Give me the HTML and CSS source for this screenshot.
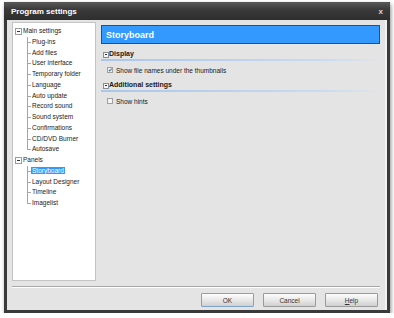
FILE: index.html
```html
<!DOCTYPE html>
<html lang="en">
<head>
    <meta charset="UTF-8">
    <title>Program settings</title>
    <link rel="stylesheet" href="styles.css">
</head>
<body>
    <div class="window">
        <div class="titlebar">
            <span class="title">Program settings</span>
            <span class="close">x</span>
        </div>
        <div class="client">
            <div class="main">
                <div class="tree">
                    <div class="node root"><span class="toggle"></span>Main settings</div>
                    <div class="children">
                        <div class="node">Plug-ins</div>
                        <div class="node">Add files</div>
                        <div class="node">User interface</div>
                        <div class="node">Temporary folder</div>
                        <div class="node">Language</div>
                        <div class="node">Auto update</div>
                        <div class="node">Record sound</div>
                        <div class="node">Sound system</div>
                        <div class="node">Confirmations</div>
                        <div class="node">CD/DVD Burner</div>
                        <div class="node last">Autosave</div>
                    </div>
                    <div class="node root"><span class="toggle"></span>Panels</div>
                    <div class="children">
                        <div class="node"><span class="selected">Storyboard</span></div>
                        <div class="node">Layout Designer</div>
                        <div class="node">Timeline</div>
                        <div class="node last">Imagelist</div>
                    </div>
                </div>
                <div class="pane">
                    <div class="pane-header">Storyboard</div>
                    <div class="section">
                        <div class="section-title"><span class="toggle"></span>Display</div>
                        <label class="option"><span class="check checked">&#10004;</span>Show file names under the thumbnails</label>
                    </div>
                    <div class="section">
                        <div class="section-title"><span class="toggle"></span>Additional settings</div>
                        <label class="option"><span class="check"></span>Show hints</label>
                    </div>
                </div>
            </div>
            <div class="footer">
                <button class="btn default">OK</button>
                <button class="btn">Cancel</button>
                <button class="btn"><u>H</u>elp</button>
            </div>
        </div>
    </div>
</body>
</html>
```

FILE: styles.css
```css
body {
    margin: 0;
    background-color: #ffffff;
    font-family: 'Liberation Sans', Arial, sans-serif;
    font-size: 6.5px;
    color: #1a1a1a;
}
.window {
    margin: 2px 0 0 4px;
    width: 380px;
    border: 3px solid #3a3a3a;
    border-top: 0;
    box-shadow: 1px 2px 4px rgba(0, 0, 0, 0.45);
}
.titlebar {
    height: 18px;
    margin: 0 -3px;
    padding: 0 7px;
    background: linear-gradient(#5a5a5a, #3a3a3a 40%, #2e2e2e);
    border-radius: 2px 2px 0 0;
    display: flex;
    align-items: center;
    justify-content: space-between;
    color: #ffffff;
}
.title {
    font-size: 8px;
    font-weight: bold;
}
.close {
    font-size: 8px;
    font-weight: bold;
    color: #d8d8d8;
}
.client {
    height: 290px;
    background-color: #e4e4e4;
    border-right: 2px solid #f2f2f2;
    box-sizing: border-box;
    padding: 2px 5px 0 5px;
}
.main {
    display: flex;
    gap: 5px;
    height: 259px;
}

/* tree */
.tree {
    width: 84px;
    box-sizing: border-box;
    background-color: #ffffff;
    border: 1px solid #c4c4c4;
    padding-top: 3px;
}
.node {
    height: 10.75px;
    line-height: 10.75px;
    position: relative;
    white-space: nowrap;
}
.root {
    padding-left: 10px;
}
.root .toggle {
    left: 2px;
    top: 2px;
}
.children .node {
    padding-left: 19px;
}
.children .node::before {
    content: "";
    position: absolute;
    left: 14px;
    top: 0;
    height: 100%;
    border-left: 1px solid #a6a6a6;
}
.children .node.last::before {
    height: 6px;
}
.children .node::after {
    content: "";
    position: absolute;
    left: 14px;
    top: 5px;
    width: 4px;
    border-top: 1px solid #a6a6a6;
}
.selected {
    background-color: #3399ff;
    color: #ffffff;
    padding: 0 1px;
    margin-left: -1px;
}
.toggle {
    position: absolute;
    width: 5px;
    height: 5px;
    border: 1px solid #9c9c9c;
    background-color: #ffffff;
}
.toggle::after {
    content: "";
    position: absolute;
    left: 1px;
    top: 2px;
    width: 3px;
    border-top: 1px solid #333333;
}

/* right pane */
.pane {
    flex: 1;
    padding-top: 3px;
}
.pane-header {
    height: 19px;
    box-sizing: border-box;
    background-color: #3399ff;
    border: 1px solid #23508a;
    color: #ffffff;
    font-size: 9px;
    font-weight: bold;
    padding-left: 4px;
    display: flex;
    align-items: center;
}
.section-title {
    position: relative;
    height: 11px;
    margin-top: 4px;
    padding-left: 8px;
    font-size: 7px;
    font-weight: bold;
    line-height: 12px;
    border-bottom: 2px solid #b4cdea;
    border-image: linear-gradient(to right, #a9c6ea, #c8dbf2 80%, #e4e4e4) 1;
}
.section-title .toggle {
    left: 2px;
    top: 4px;
    width: 4px;
    height: 4px;
    border-color: #8c8c8c;
    background-color: #f6f6f6;
}
.section-title .toggle::after {
    left: 1px;
    top: 1px;
    width: 2px;
}
.option {
    display: flex;
    align-items: center;
    height: 10px;
    margin: 4px 0 2px 6px;
}
.check {
    width: 6px;
    height: 6px;
    box-sizing: border-box;
    border: 1px solid #a0a0a0;
    background-color: #f4f4f4;
    margin-right: 3px;
    font-size: 6px;
    line-height: 5px;
    color: #2f5fb0;
    text-align: center;
    overflow: hidden;
}

/* footer */
.footer {
    margin-top: 5px;
    border-top: 1px solid #a8a8a8;
    box-shadow: inset 0 1px 0 #ffffff;
    padding: 6px 2px 0 0;
    display: flex;
    justify-content: flex-end;
    gap: 9px;
}
.btn {
    width: 53px;
    height: 14px;
    padding: 0;
    font-family: 'Liberation Sans', Arial, sans-serif;
    font-size: 6.5px;
    color: #333333;
    border: 1px solid #9a9a9a;
    border-radius: 1px;
    background: linear-gradient(#fdfdfd, #e6e6e6 55%, #d0d0d0);
}
.btn.default {
    border-color: #7ea2c8;
}
```
